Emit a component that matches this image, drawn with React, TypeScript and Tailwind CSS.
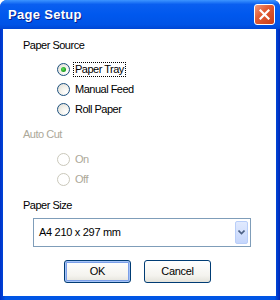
import React from "react"

const font = { fontFamily: '"Liberation Sans", Arial, sans-serif' }

function Radio({ label, checked, disabled, focus }: { label: string; checked?: boolean; disabled?: boolean; focus?: boolean }) {
    return (
        <div className="h-[20px] flex items-center pl-[54px]">
            <span
                className={
                    disabled
                        ? "w-[13px] h-[13px] rounded-full border border-[#cac8bb] bg-white flex items-center justify-center"
                        : "w-[13px] h-[13px] rounded-full border border-[#1c5180] bg-[radial-gradient(circle_at_70%_70%,#ffffff_0%,#f4f3ee_40%,#dcd9cf_100%)] flex items-center justify-center"
                }
            >
                {checked ? (
                    <span className="w-[5px] h-[5px] rounded-full bg-[radial-gradient(circle_at_40%_40%,#5ee05e_0%,#21a121_60%,#1a8a1a_100%)]" />
                ) : null}
            </span>
            <span
                className={
                    "ml-[4px] px-[1px] text-[11px] leading-[13px] tracking-[-0.5px] " +
                    (disabled ? "text-[#aca899]" : "text-black") +
                    (focus ? " outline outline-1 outline-dotted outline-black" : "")
                }
            >
                {label}
            </span>
        </div>
    )
}

function Button({ children, isDefault }: { children: React.ReactNode; isDefault?: boolean }) {
    return (
        <button
            className={
                "w-[67px] h-[23px] rounded-[3px] border border-[#003c74] bg-[linear-gradient(#ffffff,#f4f3ee_70%,#e3e2da)] text-[11px] text-black tracking-[-0.3px] " +
                (isDefault ? "shadow-[inset_0_0_0_1px_#a6c3f7,inset_0_0_0_2px_#7b9fe8]" : "")
            }
        >
            {children}
        </button>
    )
}

export default function App() {
    return (
        <div className="w-[280px] h-[300px] flex flex-col rounded-t-[7px] bg-[linear-gradient(90deg,#0031c8,#0055e5_2%,#0055e5_98%,#0027b8)] overflow-hidden" style={font}>
            <div className="h-[29px] flex items-center justify-between pl-[8px] pr-[5px] bg-[linear-gradient(#3d95ff,#0a5ff0_15%,#0058ee_50%,#0053e6_85%,#0046d4)]">
                <span className="text-white font-bold text-[13px] tracking-[0.3px] [text-shadow:1px_1px_0_#0a1e8a]">Page Setup</span>
                <span className="w-[21px] h-[21px] rounded-[3px] border border-white bg-[linear-gradient(135deg,#f09a80,#e35d35_40%,#c83d17)] flex items-center justify-center">
                    <svg width="11" height="11" viewBox="0 0 11 11">
                        <path d="M1.5 1.5 L9.5 9.5 M9.5 1.5 L1.5 9.5" stroke="#fff" strokeWidth="2.2" strokeLinecap="square" />
                    </svg>
                </span>
            </div>
            <div className="flex-1 ml-[3px] mr-[4px] mb-[4px] bg-white flex flex-col">
                <div className="pl-[20px] pt-[10px] text-[11px] leading-[13px] tracking-[-0.5px] text-black">Paper Source</div>
                <div className="mt-[7px] flex flex-col">
                    <Radio label="Paper Tray" checked focus />
                    <Radio label="Manual Feed" />
                    <Radio label="Roll Paper" />
                </div>
                <div className="pl-[20px] mt-[9px] text-[11px] leading-[13px] tracking-[-0.5px] text-[#aca899]">Auto Cut</div>
                <div className="mt-[8px] flex flex-col">
                    <Radio label="On" disabled />
                    <Radio label="Off" disabled />
                </div>
                <div className="pl-[20px] mt-[10px] text-[11px] leading-[13px] tracking-[-0.5px] text-black">Paper Size</div>
                <div className="mt-[6px] ml-[30px] w-[218px] h-[29px] border border-[#7f9db9] flex items-center pl-[5px] pr-[2px]">
                    <span className="flex-1 text-[11px] tracking-[-0.3px] text-black">A4 210 x 297 mm</span>
                    <span className="w-[13px] h-[23px] rounded-[2px] border border-[#b9cef9] bg-[linear-gradient(#e1eafe,#c5d6fc)] flex items-center justify-center">
                        <svg width="7" height="5" viewBox="0 0 7 5">
                            <path d="M0.5 0.5 L3.5 3.5 L6.5 0.5" stroke="#4d6185" strokeWidth="1.6" fill="none" />
                        </svg>
                    </span>
                </div>
                <div className="mt-[13px] flex pl-[61px] gap-[13px]">
                    <Button isDefault>OK</Button>
                    <Button>Cancel</Button>
                </div>
            </div>
        </div>
    )
}
